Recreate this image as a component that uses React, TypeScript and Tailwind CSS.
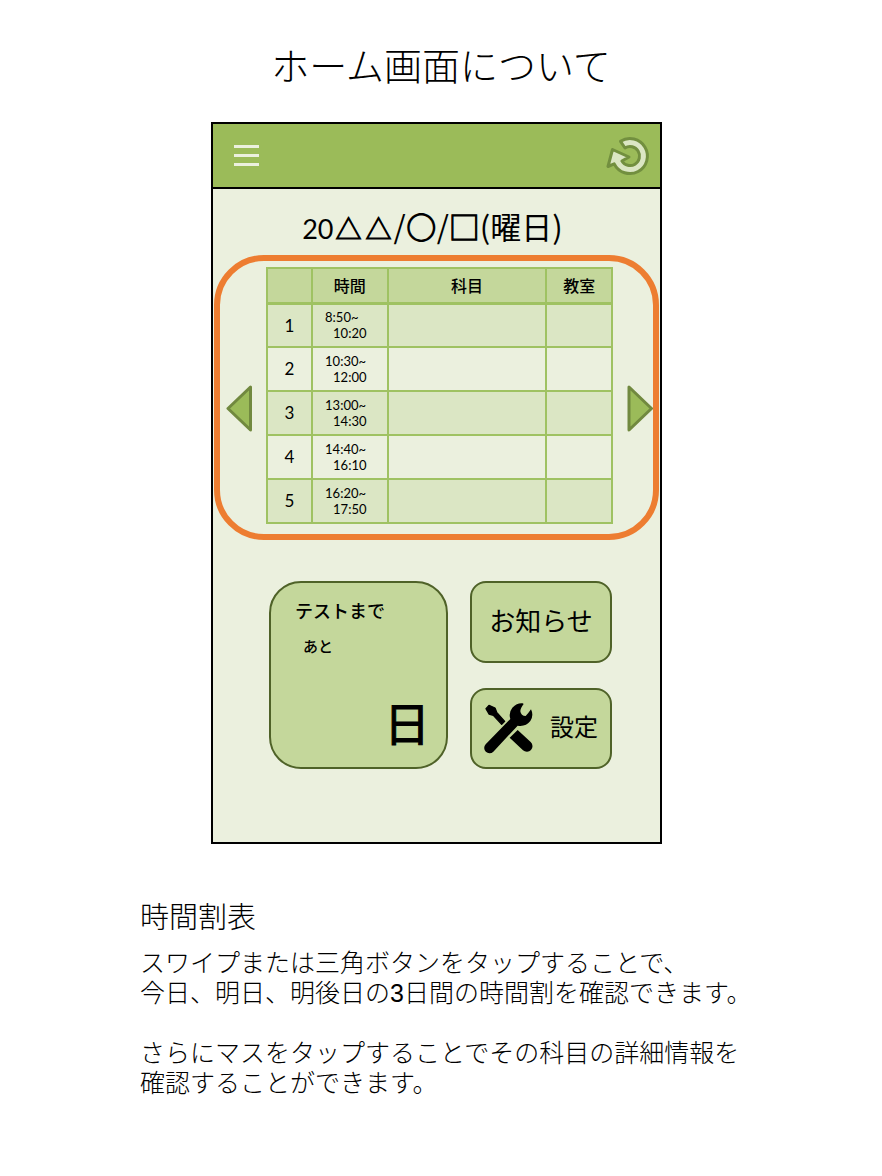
const JP = "font-['Noto_Sans_CJK_JP',sans-serif]";

const periods = [
  { start: "8:50", end: "10:20" },
  { start: "10:30", end: "12:00" },
  { start: "13:00", end: "14:30" },
  { start: "14:40", end: "16:10" },
  { start: "16:20", end: "17:50" },
];

function RefreshIcon() {
  return (
    <svg width="46" height="42" viewBox="0 0 46 42" aria-hidden="true">
      <path
        d="M15.5 6.3 A17.5 17.5 0 1 1 9.2 28.8 L3 31.5 L7.5 14.5 L24 22 L16.9 26 A9.5 9.5 0 1 0 20 13 Z"
        fill="#dbe6c4"
        stroke="#728f3f"
        strokeWidth="3"
        strokeLinejoin="round"
      />
    </svg>
  );
}

function ToolsIcon() {
  return (
    <svg width="49" height="51" viewBox="27 21 147 153" className="shrink-0" aria-hidden="true">
      <path d="M146 24 Q136 37 136 46 Q138 60 152 60 Q160 52 168 40 Q177 58 166 75 Q152 93 128 89 L55 167 A15 15 0 0 1 32 145 L106 69 Q100 50 112 35 Q127 20 143 22 Z" />
      <path d="M33 38 L42 28 L60 36 L65 49 L89 76 L80 85 L55 58 L42 54 Z" strokeWidth="4" stroke="black" strokeLinejoin="round" />
      <path d="M128 102 L167 138 A16.5 16.5 0 0 1 144 163 L104 125 Z" />
    </svg>
  );
}

function Arrow({ direction }: { direction: "left" | "right" }) {
  const points = direction === "left" ? "2,23.5 24.5,2 24.5,45" : "24.5,23.5 2,2 2,45";
  return (
    <button type="button" aria-label={direction === "left" ? "前の日" : "次の日"} className="mt-[26px] shrink-0">
      <svg width="26" height="47" viewBox="0 0 26 47" className="block" aria-hidden="true">
        <polygon points={points} fill="#9bbb59" stroke="#71893f" strokeWidth="3" strokeLinejoin="round" />
      </svg>
    </button>
  );
}

function Timetable() {
  return (
    <table className="w-full table-fixed border-collapse border-2 border-[#9fc262] text-black">
      <colgroup>
        <col className="w-[13%]" />
        <col className="w-[22%]" />
        <col className="w-[46%]" />
        <col className="w-[19%]" />
      </colgroup>
      <thead>
        <tr className={`h-[35px] bg-[#c4d79b] text-base ${JP}`}>
          {["", "時間", "科目", "教室"].map((label) => (
            <th key={label} scope="col" className="border-2 border-b-3 border-[#9fc262] p-0 leading-6 font-medium">
              {label}
            </th>
          ))}
        </tr>
      </thead>
      <tbody>
        {periods.map((p, i) => (
          <tr key={p.start} className="h-11 odd:bg-[#dbe6c4]">
            <th scope="row" className="border-2 border-[#9fc262] p-0 font-['Lato',sans-serif] text-[17px] font-normal">
              {i + 1}
            </th>
            <td className="border-2 border-[#9fc262] p-0 pr-2 text-center font-['Lato',sans-serif] text-[13px] leading-4">
              <span className="inline-block text-left align-middle">
                <span className="block">{p.start}~</span>
                <span className="block pl-2">{p.end}</span>
              </span>
            </td>
            <td className="border-2 border-[#9fc262]" />
            <td className="border-2 border-[#9fc262]" />
          </tr>
        ))}
      </tbody>
    </table>
  );
}

function PhoneScreen() {
  return (
    <section className={`mx-auto w-full max-w-[451px] border-2 border-black bg-[#ebf0de] text-black ${JP}`}>
      <header className="flex h-[65px] items-center justify-between border-b-2 border-black bg-[#9bbb59] pr-[9px] pl-[21px]">
        <button type="button" aria-label="メニュー" className="flex w-[25px] flex-col gap-[6px]">
          <span className="h-[3px] w-full bg-[#ebf0de]" />
          <span className="h-[3px] w-full bg-[#ebf0de]" />
          <span className="h-[3px] w-full bg-[#ebf0de]" />
        </button>
        <button type="button" aria-label="更新">
          <RefreshIcon />
        </button>
      </header>

      <p className="h-[66px] pt-2 pr-2 text-center text-[31px] leading-[58px]">
        <span className="font-['Lato',sans-serif] text-[27px]">20</span>
        <span className="text-[26px] [-webkit-text-stroke:1px_black]">
          <span className="px-[2px]">△</span>
          <span className="px-[2px]">△</span>
        </span>
        /〇/<span className="[-webkit-text-stroke:1px_black]">□</span>(曜日)
      </p>

      <div className="mx-px flex items-center gap-[14px] rounded-[50px] border-6 border-[#ed7d31] pt-[6px] pb-[10px] pl-[6px]">
        <Arrow direction="left" />
        <div className="min-w-0 flex-1">
          <Timetable />
        </div>
        <Arrow direction="right" />
      </div>

      <div className="mt-[41px] mb-[73px] grid grid-cols-[179fr_142fr] gap-[22px] pr-[48px] pl-[56px]">
        <div className="flex h-[188px] flex-col rounded-[32px] border-2 border-[#4f6228] bg-[#c4d79b] px-4 pt-[15px] pb-5">
          <p className="pl-2 text-[18px] leading-6 font-medium">テストまで</p>
          <p className="mt-3 pl-4 text-[15px] leading-6 font-medium">あと</p>
          <p className="mt-auto text-right text-[46px] leading-[52px] [-webkit-text-stroke:1px_black]">日</p>
        </div>
        <div className="grid grid-rows-2 gap-[25px]">
          <button type="button" className="rounded-2xl border-2 border-[#4f6228] bg-[#c4d79b] pb-1 text-[26px]">
            お知らせ
          </button>
          <button
            type="button"
            className="flex items-center justify-between rounded-2xl border-2 border-[#4f6228] bg-[#c4d79b] px-3 text-[24px]"
          >
            <ToolsIcon />
            <span className="pb-1">設定</span>
          </button>
        </div>
      </div>
    </section>
  );
}

export default function App() {
  return (
    <main className={`min-h-screen bg-white pt-[38px] pb-16 text-black ${JP}`}>
      <h1 className="text-center text-[38px] leading-[52px] font-light">ホーム画面について</h1>
      <div className="mt-8 pr-[9px]">
        <PhoneScreen />
      </div>
      <article className="mx-auto mt-[51px] w-full max-w-[630px] pl-[14px]">
        <h2 className="text-[29px] leading-10 font-light">時間割表</h2>
        <p className="mt-[11px] text-[25px] leading-[30px] font-light">
          スワイプまたは三角ボタンをタップすることで、
          <br />
          今日、明日、明後日の<span className="font-['Liberation_Sans',sans-serif] leading-none">3</span>日間の時間割を確認できます。
        </p>
        <p className="mt-[30px] text-[25px] leading-[30px] font-light">
          さらにマスをタップすることでその科目の詳細情報を
          <br />
          確認することができます。
        </p>
      </article>
    </main>
  );
}
